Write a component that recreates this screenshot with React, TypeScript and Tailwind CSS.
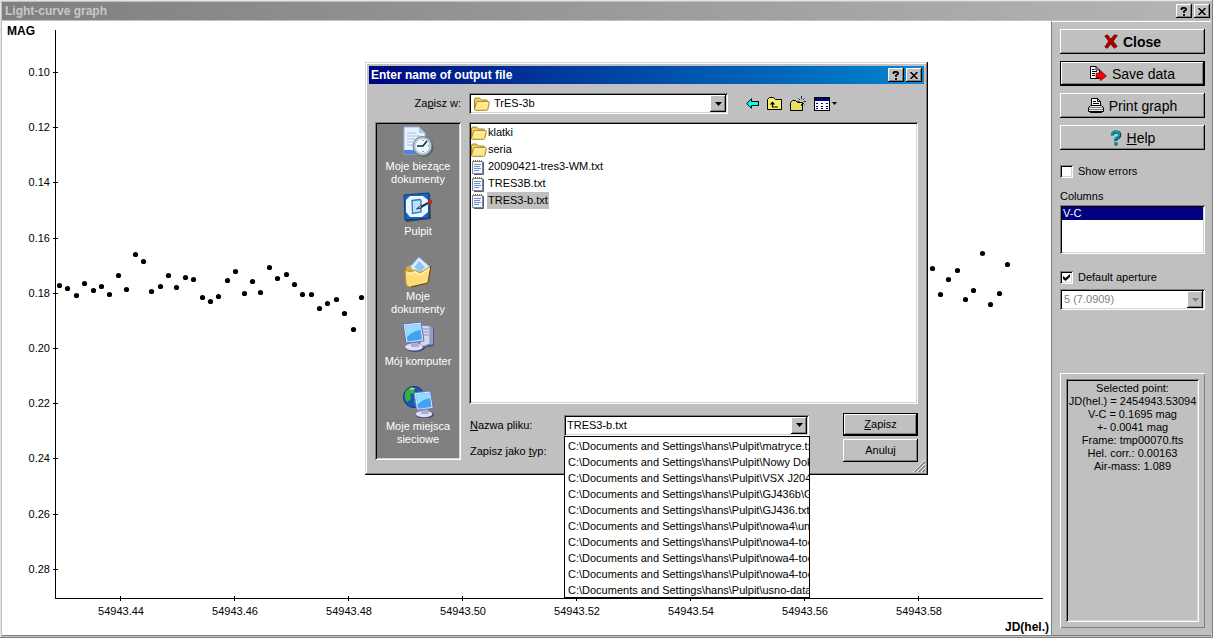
import { ReactNode } from "react";

const raised =
  "bg-[#c0c0c0] shadow-[inset_-1px_-1px_0_#000,inset_1px_1px_0_#fff,inset_-2px_-2px_0_#808080]";
const sunken =
  "p-[2px] shadow-[inset_1px_1px_0_#808080,inset_-1px_-1px_0_#fff,inset_2px_2px_0_#000,inset_-2px_-2px_0_#d4d4d4]";

const yTicks = [
  { y: 72, label: "0.10" },
  { y: 127, label: "0.12" },
  { y: 182, label: "0.14" },
  { y: 238, label: "0.16" },
  { y: 293, label: "0.18" },
  { y: 348, label: "0.20" },
  { y: 403, label: "0.22" },
  { y: 458, label: "0.24" },
  { y: 514, label: "0.26" },
  { y: 569, label: "0.28" },
];

const xTicks = [
  { x: 120, label: "54943.44" },
  { x: 234, label: "54943.46" },
  { x: 348, label: "54943.48" },
  { x: 462, label: "54943.50" },
  { x: 576, label: "54943.52" },
  { x: 690, label: "54943.54" },
  { x: 804, label: "54943.56" },
  { x: 918, label: "54943.58" },
];

const points = [
  [59, 285], [67, 288], [76, 295], [84, 283], [93, 290], [101, 286], [109, 294], [118, 275],
  [126, 289], [135, 254], [143, 261], [151, 291], [160, 286], [168, 275], [176, 287], [185, 277],
  [193, 279], [202, 297], [210, 301], [218, 296], [227, 280], [235, 271], [244, 293], [252, 281],
  [260, 292], [269, 267], [277, 278], [286, 274], [294, 284], [302, 294], [311, 294], [319, 308],
  [327, 303], [336, 299], [344, 313], [353, 329], [361, 297], [932, 268], [940, 294], [948, 279],
  [957, 270], [965, 299], [973, 290], [982, 253], [990, 304], [999, 293], [1007, 264],
];

const files = [
  { name: "klatki", folder: true },
  { name: "seria", folder: true },
  { name: "20090421-tres3-WM.txt" },
  { name: "TRES3B.txt" },
  { name: "TRES3-b.txt", selected: true },
];

const history = [
  "C:\\Documents and Settings\\hans\\Pulpit\\matryce.txt",
  "C:\\Documents and Settings\\hans\\Pulpit\\Nowy Dokument",
  "C:\\Documents and Settings\\hans\\Pulpit\\VSX J2044",
  "C:\\Documents and Settings\\hans\\Pulpit\\GJ436b\\GJ",
  "C:\\Documents and Settings\\hans\\Pulpit\\GJ436.txt",
  "C:\\Documents and Settings\\hans\\Pulpit\\nowa4\\une",
  "C:\\Documents and Settings\\hans\\Pulpit\\nowa4-tocc",
  "C:\\Documents and Settings\\hans\\Pulpit\\nowa4-tocc",
  "C:\\Documents and Settings\\hans\\Pulpit\\nowa4-tocc",
  "C:\\Documents and Settings\\hans\\Pulpit\\usno-data",
];

function Chart() {
  return (
    <svg
      viewBox="2 21 1049 614"
      preserveAspectRatio="xMinYMin meet"
      className="block h-full w-full bg-white text-[11px]"
      role="img"
      aria-label="Light curve"
    >
      <g stroke="#000" fill="none" shapeRendering="crispEdges">
        <path d="M55.5 30V598.5H1043" />
        {yTicks.map((t) => (
          <path key={t.y} d={`M53 ${t.y + 0.5}H58`} />
        ))}
        {xTicks.map((t) => (
          <path key={t.x} d={`M${t.x + 0.5} 596V601`} />
        ))}
      </g>
      <text x="7" y="35" className="text-xs font-bold">MAG</text>
      <text x="1049" y="631" textAnchor="end" className="text-xs font-bold">JD(hel.)</text>
      {yTicks.map((t) => (
        <text key={t.y} x="50" y={t.y + 4} textAnchor="end">{t.label}</text>
      ))}
      {xTicks.map((t) => (
        <text key={t.x} x={t.x + 1} y="615" textAnchor="middle">{t.label}</text>
      ))}
      {points.map(([x, y]) => (
        <circle key={x} cx={x + 0.5} cy={y + 0.5} r="2.6" />
      ))}
    </svg>
  );
}

function CaptionButtons() {
  return (
    <div className="flex gap-[2px]">
      <button aria-label="Context help" className={`flex h-[14px] w-4 items-center justify-center ${raised}`}>
        <svg width="8" height="9" viewBox="0 0 8 9" fill="none" stroke="#000" strokeWidth="1.7">
          <path d="M1.5 3V1.5Q2 .8 4 .8T6.3 2.2Q6.3 3.3 4 4.3V6M4 7V9" />
        </svg>
      </button>
      <button aria-label="Close window" className={`flex h-[14px] w-4 items-center justify-center ${raised}`}>
        <svg width="8" height="7" viewBox="0 0 8 7" stroke="#000" strokeWidth="1.5">
          <path d="M.5 0 7.5 7M7.5 0 .5 7" />
        </svg>
      </button>
    </div>
  );
}

function DropArrow({ disabled }: { disabled?: boolean }) {
  return (
    <span className={`pointer-events-none flex w-4 shrink-0 items-center justify-center ${raised}`}>
      <svg width="7" height="4" viewBox="0 0 7 4" fill={disabled ? "#808080" : "#000"}>
        <path d="M0 0H7L3.5 4Z" />
      </svg>
    </span>
  );
}

function CloseIcon() {
  return (
    <svg width="14" height="15" viewBox="0 0 14 15">
      <path d="M.8 2 3.5.8 6.8 5 10.5.8 13.4 1.5 9.2 7.3 13.2 12.3 10.3 14.3 6.7 10 3.4 14.3.8 12.9 4.7 7.3Z" fill="#a80000" stroke="#780000" strokeWidth=".8" />
    </svg>
  );
}

function SaveIcon() {
  return (
    <svg width="17" height="15" viewBox="0 0 17 15">
      <path d="M.5.5H6L9.5 4V12.5H.5Z" fill="#fff" stroke="#000" />
      <path d="M6 .5V4H9.5M2 3.5H4.5M2 5.5H7M2 7.5H5M2 9.5H5" fill="none" stroke="#000" />
      <path d="M6 7H10.5V4.5L16.5 10 10.5 14.8V12H6Z" fill="#f00" stroke="#600000" strokeWidth=".6" />
    </svg>
  );
}

function PrintIcon() {
  return (
    <svg width="16" height="15" viewBox="0 0 16 15">
      <path d="M3.5 8V.5H9.5L12.5 3.5V8" fill="#fff" stroke="#000" />
      <path d="M9.5.5V3.5H12.5M5 3.5H8M5 5.5H11" fill="none" stroke="#000" />
      <path d="M2.5 7.5H13.5L15.5 9.5V13.5H.5V9.5Z" fill="#e4e4e4" stroke="#000" />
      <path d="M1 9.5H15M1 11.5H15" stroke="#888" />
      <path d="M2 14.5H14" stroke="#000" />
    </svg>
  );
}

function HelpIcon() {
  return (
    <svg width="12" height="16" viewBox="0 0 12 16" fill="none">
      <path d="M2.5 5.5Q2 2 6 2T9.8 5Q9.8 7 7.5 8T6 11M6 12.5V15.5" stroke="#004858" strokeWidth="3" />
      <path d="M1.8 5Q2 1.5 5.5 1.5T9.2 4.5Q9.2 6.5 7 7.5T5.4 10.5M5.4 12V15" stroke="#00a0b0" strokeWidth="2.2" />
    </svg>
  );
}

function FolderIcon() {
  return (
    <svg width="16" height="14" viewBox="0 0 16 14" className="shrink-0">
      <path d="M.5 3Q.5 1 2 1H5.5L7.5 3H12.5Q13.5 3 13.5 4.5V12H.5Z" fill="#f0cb58" stroke="#a88420" />
      <path d="M.5 12 2.5 5.5Q2.8 4.7 3.6 4.7H14.5Q15.6 4.7 15.3 5.7L13.8 12.3Q13.5 13.3 12.5 13.3H1.5Q.5 13.3.5 12Z" fill="#fde88c" stroke="#a88420" />
      <path d="M3.5 6H14" stroke="#fffbd0" />
    </svg>
  );
}

function TextFileIcon() {
  return (
    <svg width="16" height="16" viewBox="0 0 16 16" className="shrink-0">
      <path d="M1.5 2.5H11.5V14.5H1.5Z" fill="#f4f7ff" stroke="#7a88a8" />
      <path d="M12.5 3V15.5H3" fill="none" stroke="#555e70" />
      <path d="M2.5 1V3M4.5 1V3M6.5 1V3M8.5 1V3M10.5 1V3" stroke="#857a3c" />
      <path d="M3 5.5H10M3 7.5H9M3 9.5H10M3 11.5H8" stroke="#6f8fc0" />
    </svg>
  );
}

function RecentIcon() {
  return (
    <svg width="32" height="32" viewBox="0 0 32 32">
      <path d="M2 1H17L23 7V28H2Z" fill="#e9f1ff" stroke="#9ab4e0" />
      <path d="M2 24H23V28H2Z" fill="#4d86dc" />
      <path d="M17 1V7H23Z" fill="#a9c6f5" />
      <path d="M5 7H14M5 10H18M5 13H13M5 16H11M5 19H11" stroke="#a5bfe8" />
      <circle cx="21.5" cy="21" r="10" fill="#56606c" />
      <circle cx="20.5" cy="20" r="9.5" fill="#b8c7d4" stroke="#6d7d8c" />
      <circle cx="20.5" cy="20" r="7" fill="#edf8ff" />
      <path d="M25 15 21 20H15" fill="none" stroke="#102a3a" strokeWidth="1.6" />
      <path d="M21 14V15M27 20H26M21 26V25" stroke="#3a5970" />
    </svg>
  );
}

function DesktopIcon() {
  return (
    <svg width="32" height="32" viewBox="0 0 32 32">
      <path d="M4 5 28 3 29 28 4 31Z" fill="#444" />
      <path d="M2 4 27 2V27L3 29Z" fill="#1466c8" stroke="#083c8c" />
      <path d="M8 5H21L26 9V21L20 26H8L4 21V9Z" fill="#eef6ff" />
      <path d="M10 9.5 18 8.5 19 10V21L10.5 22.5Z" fill="#b9e1fb" stroke="#2a78c4" strokeWidth="1.3" />
      <path d="M17 17 26 12" stroke="#123c66" strokeWidth="2.2" />
      <path d="M14.5 18 19 14.5 20 16.5Z" fill="#fff" stroke="#234" />
      <circle cx="28" cy="11" r="2.4" fill="#b92620" />
    </svg>
  );
}

function DocumentsIcon() {
  return (
    <svg width="32" height="32" viewBox="0 0 32 32">
      <path d="M4 11 11 8 15 10 27 9V27L5 29Z" fill="#dca936" />
      <path d="M8 11 17 1 29 12 18 22Z" fill="#d9efff" stroke="#85b4dd" />
      <path d="M12.5 11 17 5 23 11 18 17Z" fill="#8fc4f0" />
      <path d="M3 14 8 16 13 14 18 17 29 10 26 27 8 31Q5 31 4 28Z" fill="#fbdc75" stroke="#c18f24" />
      <path d="M5 16 9 18 13 16 18 19 27 13" fill="none" stroke="#fff3b8" strokeWidth="1.5" />
      <path d="M9 31 26 27 29 10" fill="none" stroke="#574620" />
    </svg>
  );
}

function Monitor() {
  return (
    <>
      <ellipse cx="13" cy="27" rx="10" ry="4" fill="#4b4d7b" />
      <ellipse cx="12" cy="26" rx="9" ry="3.5" fill="#dedff4" />
      <path d="M9 20H16L17 26H9Z" fill="#a9abd8" />
      <path d="M1 3 19 1 22 20 4 22Z" fill="#dcdff8" stroke="#6a6db0" />
      <path d="M3 4.5 18 3 20 18.5 5.5 20.5Z" fill="#3fa5f2" />
      <path d="M3 4.5 18 3 19 9Q10 10 5 16Z" fill="#93dcff" />
    </>
  );
}

function ComputerIcon() {
  return (
    <svg width="32" height="32" viewBox="0 0 32 32">
      <path d="M19 4 30 6 32 8V25L22 27Z" fill="#55577e" />
      <path d="M18 4 28 5V23L20 26 18 23Z" fill="#d5d7ee" stroke="#8285b4" />
      <path d="M28 5 31 7V23L28 24Z" fill="#9799c5" />
      <path d="M20 8H27M20 11H27M20 14H27" stroke="#8c8fc0" />
      <Monitor />
    </svg>
  );
}

function NetworkIcon() {
  return (
    <svg width="32" height="32" viewBox="0 0 32 32">
      <circle cx="12" cy="11" r="10.5" fill="#1758b8" stroke="#0c3678" />
      <path d="M4 5Q9 0 13 2L12 7 8 8 9 13 5 16Q1 11 4 5ZM13 10 19 8 22 13 17 20 12 17Z" fill="#37b43a" />
      <path d="M8 3Q11 2 12 3" fill="none" stroke="#b6f0a8" strokeWidth="1.5" />
      <g transform="translate(11 4) scale(.92)">
        <Monitor />
      </g>
    </svg>
  );
}

const places = [
  { lines: ["Moje bieżące", "dokumenty"], icon: <RecentIcon /> },
  { lines: ["Pulpit"], icon: <DesktopIcon /> },
  { lines: ["Moje", "dokumenty"], icon: <DocumentsIcon /> },
  { lines: ["Mój komputer"], icon: <ComputerIcon /> },
  { lines: ["Moje miejsca", "sieciowe"], icon: <NetworkIcon /> },
];

function Toolbar() {
  return (
    <div className="flex items-center gap-2">
      <button aria-label="Back">
        <svg width="13" height="11" viewBox="0 0 13 11" className="block">
          <path d="M.7 5.5 5.5.8V3.5H12.5V7.5H5.5V10.2Z" fill="#0ff" stroke="#000" />
        </svg>
      </button>
      <button aria-label="Up one level">
        <svg width="15" height="14" viewBox="0 0 15 14" className="block">
          <path d="M.5 12.5V2.5L2.5.5H6.5L8.5 2.5H14.5V12.5Z" fill="#f5ee70" stroke="#000" />
          <path d="M5.5 5V10H11" fill="none" stroke="#000" strokeWidth="1.2" />
          <path d="M2.8 7.5 5.5 4.5 8.2 7.5Z" />
        </svg>
      </button>
      <button aria-label="New folder">
        <svg width="16" height="16" viewBox="0 0 16 16" className="block">
          <path d="M.5 14.5V6.5L2.5 4.5H5.5L7.5 6.5H12.5V14.5Z" fill="#e6df60" stroke="#000" />
          <path d="M11.5 0V3M11.5 8V10M7.5 5.5H9.5M13.5 5.5H16M8.5 2.5 10 4M14.5 2.5 13 4M14.5 8.5 13 7" stroke="#000" strokeWidth=".8" />
        </svg>
      </button>
      <button aria-label="View menu" className="flex items-center gap-[2px]">
        <svg width="16" height="14" viewBox="0 0 16 14" shapeRendering="crispEdges">
          <path d="M.5.5H15.5V13.5H.5Z" fill="#fff" stroke="#000" />
          <path d="M1 1H15V4H1Z" fill="#000080" />
          <path d="M2 6.5H4M7 6.5H9M12 6.5H14M2 9.5H4M7 9.5H9M12 9.5H14M2 11.5H4M7 11.5H9M12 11.5H14" stroke="#000080" />
        </svg>
        <svg width="5" height="3" viewBox="0 0 5 3">
          <path d="M0 0H5L2.5 3Z" />
        </svg>
      </button>
    </div>
  );
}

function SaveDialog() {
  return (
    <div
      role="dialog"
      aria-labelledby="dialog-title"
      className="absolute top-[62px] left-[365px] w-[563px] bg-[#c0c0c0] p-1 pb-3 shadow-[inset_-1px_-1px_0_#000,inset_1px_1px_0_#d4d4d4,inset_-2px_-2px_0_#808080,inset_2px_2px_0_#fff]"
    >
      <div className="flex h-[18px] items-center justify-between bg-linear-to-r from-[#000080] to-[#1084d0] pr-[2px] pl-[2px]">
        <h2 id="dialog-title" className="text-xs font-bold text-white">Enter name of output file</h2>
        <CaptionButtons />
      </div>
      <div className="px-[6px]">
        <div className="mt-[9px] flex items-center">
          <label htmlFor="folder" className="w-[86px] text-right">
            Za<u>p</u>isz w:
          </label>
          <div className={`relative ml-2 flex h-[21px] w-[259px] items-stretch bg-white ${sunken}`}>
            <span className="flex items-center pl-[3px]"><FolderIcon /></span>
            <select id="folder" className="min-w-0 flex-1 appearance-none pl-[4px] outline-none">
              <option>TrES-3b</option>
            </select>
            <DropArrow />
          </div>
          <div className="ml-[18px]">
            <Toolbar />
          </div>
        </div>

        <div className="mt-2 flex gap-2">
          <nav className={`h-[338px] w-[86px] shrink-0 bg-[#808080] text-white ${sunken}`}>
            {places.map((p) => (
              <button key={p.lines.join(" ")} className="flex h-[65px] w-full flex-col items-center gap-[2px] pt-[2px]">
                {p.icon}
                <span className="whitespace-nowrap">
                  {p.lines.map((l) => (
                    <span key={l} className="block">{l}</span>
                  ))}
                </span>
              </button>
            ))}
          </nav>
          <div className="min-w-0 flex-1">
            <ul role="listbox" aria-label="Files" className={`h-[282px] bg-white ${sunken}`}>
              {files.map((f) => (
                <li key={f.name} role="option" aria-selected={!!f.selected} className="flex h-[17px] items-center">
                  {f.folder ? <FolderIcon /> : <TextFileIcon />}
                  <span className={f.selected ? "bg-[#c0c0c0] px-px leading-[17px]" : "px-px"}>{f.name}</span>
                </li>
              ))}
            </ul>
            <div className="mt-[9px] flex items-start justify-between">
              <div>
                <div className="flex h-6 items-center">
                  <label htmlFor="file-name" className="w-[95px] pl-px">
                    <u>N</u>azwa pliku:
                  </label>
                  <div className={`relative flex h-[21px] w-[245px] bg-white ${sunken}`}>
                    <input id="file-name" defaultValue="TRES3-b.txt" className="min-w-0 flex-1 pl-px outline-none" />
                    <button aria-label="Show recent names" className="flex">
                      <DropArrow />
                    </button>
                    <ul className="absolute top-[21px] left-0 z-10 w-[246px] overflow-hidden border border-black bg-white">
                      {history.map((h, i) => (
                        <li key={i} className="h-4 pl-[3px] leading-[18px] whitespace-nowrap">{h}</li>
                      ))}
                    </ul>
                  </div>
                </div>
                <div className="mt-[2px] flex h-6 items-center pl-px">
                  <span>Zapisz jako <u>t</u>yp:</span>
                </div>
              </div>
              <div className="flex w-[75px] flex-col gap-[3px]">
                <button className={`h-[23px] border border-black ${raised}`}><u>Z</u>apisz</button>
                <button className={`h-[23px] ${raised}`}>Anuluj</button>
              </div>
            </div>
          </div>
        </div>
      </div>
      <svg width="12" height="12" viewBox="0 0 12 12" className="absolute right-[3px] bottom-[3px]">
        <path d="M0 12 12 0M4 12 12 4M8 12 12 8" stroke="#fff" />
        <path d="M1.5 12 12 1.5M5.5 12 12 5.5M9.5 12 12 9.5" stroke="#808080" strokeWidth="1.4" />
      </svg>
    </div>
  );
}

function SideButton({ icon, children, className = "" }: { icon: ReactNode; children: ReactNode; className?: string }) {
  return (
    <button className={`flex h-[25px] items-center justify-center gap-[5px] text-sm ${raised} ${className}`}>
      {icon}
      <span>{children}</span>
    </button>
  );
}

function Checkbox({ label, checked }: { label: string; checked?: boolean }) {
  return (
    <label className="flex h-[13px] items-center gap-[5px]">
      <span className="relative flex">
        <input
          type="checkbox"
          defaultChecked={checked}
          className={`peer size-[13px] appearance-none bg-white ${sunken}`}
        />
        <svg width="7" height="7" viewBox="0 0 7 7" className="pointer-events-none absolute top-[3px] left-[3px] hidden peer-checked:block">
          <path d="M0 2V5L2.5 7 7 3V0L2.5 4Z" />
        </svg>
      </span>
      {label}
    </label>
  );
}

function Sidebar() {
  return (
    <aside className="flex w-40 shrink-0 flex-col border-t border-l border-t-white border-l-[#808080] bg-[#c0c0c0] pt-[7px] pr-[6px] pb-[7px] pl-2">
      <div className="flex flex-col gap-[7px]">
        <SideButton icon={<CloseIcon />} className="font-bold">Close</SideButton>
        <SideButton icon={<SaveIcon />} className="border border-black">Save data</SideButton>
        <SideButton icon={<PrintIcon />}>Print graph</SideButton>
        <SideButton icon={<HelpIcon />}><u>H</u>elp</SideButton>
      </div>
      <div className="mt-[15px]">
        <Checkbox label="Show errors" />
      </div>
      <p id="columns" className="mt-3">Columns</p>
      <ul role="listbox" aria-labelledby="columns" className={`mt-[2px] h-[49px] bg-white ${sunken}`}>
        <li role="option" aria-selected="true" className="bg-[#000080] pl-px text-white">V-C</li>
      </ul>
      <div className="mt-[17px]">
        <Checkbox label="Default aperture" checked />
      </div>
      <div className={`mt-[5px] flex h-[21px] bg-white ${sunken}`}>
        <select disabled aria-label="Aperture" className="min-w-0 flex-1 appearance-none pl-[2px] text-[#808080] opacity-100">
          <option>5 (7.0909)</option>
        </select>
        <DropArrow disabled />
      </div>
      <div className="mt-[63px] flex flex-1 flex-col p-[6px] shadow-[inset_1px_1px_0_#fff,inset_-1px_-1px_0_#808080]">
        <div className={`flex-1 text-center whitespace-nowrap ${sunken}`}>
          <div className="pt-px">
            <p>Selected point:</p>
            <p>JD(hel.) = 2454943.53094</p>
            <p>V-C = 0.1695 mag</p>
            <p>+- 0.0041 mag</p>
            <p>Frame: tmp00070.fts</p>
            <p>Hel. corr.: 0.00163</p>
            <p>Air-mass: 1.089</p>
          </div>
        </div>
      </div>
    </aside>
  );
}

export default function App() {
  return (
    <div className="relative flex h-screen min-h-[600px] flex-col bg-[#c0c0c0] p-[2px] font-['Liberation_Sans',Arial,sans-serif] text-[11px] leading-[13px] text-black shadow-[inset_-1px_-1px_0_#808080,inset_1px_1px_0_#e4e4e4]">
      <header className="flex h-[18px] shrink-0 items-center justify-between bg-linear-to-r from-[#808080] to-[#b5b5b5] pr-px pl-[3px]">
        <h1 className="text-xs font-bold text-[#c8c8c8]">Light-curve graph</h1>
        <CaptionButtons />
      </header>
      <main className="mt-px flex min-h-0 flex-1 border-b border-[#808080]">
        <div className="min-w-0 flex-1">
          <Chart />
        </div>
        <Sidebar />
      </main>
      <SaveDialog />
    </div>
  );
}
